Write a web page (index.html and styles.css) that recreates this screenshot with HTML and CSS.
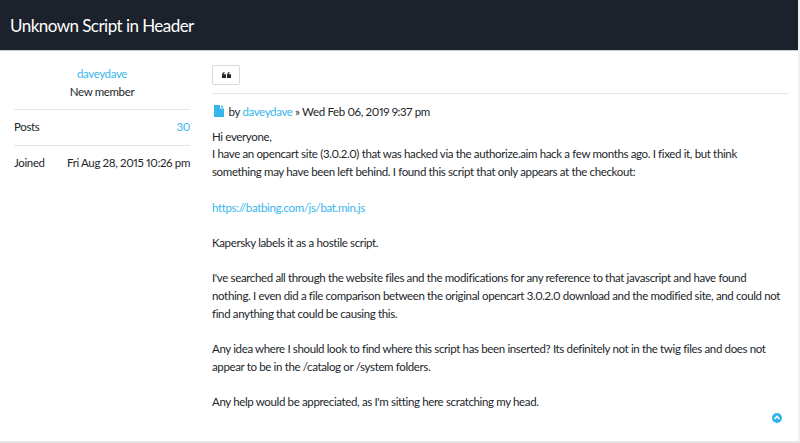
FILE: index.html
```html
<!DOCTYPE html>
<html lang="en">
<head>
<meta charset="utf-8">
<title>Unknown Script in Header</title>
<link rel="stylesheet" href="styles.css">
</head>
<body>
<header class="topic-header"><h1 class="topic-title">Unknown Script in Header</h1></header>
<main class="post">
  <aside class="profile">
    <div class="profile-id">
      <a class="link" href="#">daveydave</a>
      <div>New member</div>
    </div>
    <div class="profile-row"><span>Posts</span><a class="link" href="#">30</a></div>
    <div class="profile-row"><span>Joined</span><span>Fri Aug 28, 2015 10:26 pm</span></div>
  </aside>
  <article class="post-body">
    <div class="actions">
      <button class="quote-btn" type="button" aria-label="Quote">
        <svg class="quote-icon" viewBox="0 0 9 6" width="9" height="6"><path d="M0 3.200C0 1.400 1 .3 2.600 0v1C1.900 1.200 1.500 1.700 1.500 2.300H4V6H0zM5 3.200C5 1.400 6 .3 7.600 0v1C6.900 1.200 6.500 1.700 6.500 2.300H9V6H5z"/></svg>
      </button>
    </div>
    <p class="post-meta">
      <svg class="file-icon" viewBox="0 0 10 12" width="10" height="12"><path d="M0 0h6v3.500h4V12H0zM7 0l3 2.500H7z"/></svg>
      by <a class="link" href="#">daveydave</a> » Wed Feb 06, 2019 9:37 pm
    </p>
    <div class="content">
      <p>Hi everyone,<br>I have an opencart site (3.0.2.0) that was hacked via the authorize.aim hack a few months ago. I fixed it, but think something may have been left behind. I found this script that only appears at the checkout:</p>
      <p><a class="link" href="#">https://batbing.com/js/bat.min.js</a></p>
      <p>Kapersky labels it as a hostile script.</p>
      <p>I've searched all through the website files and the modifications for any reference to that javascript and have found nothing. I even did a file comparison between the original opencart 3.0.2.0 download and the modified site, and could not find anything that could be causing this.</p>
      <p>Any idea where I should look to find where this script has been inserted? Its definitely not in the twig files and does not appear to be in the /catalog or /system folders.</p>
      <p>Any help would be appreciated, as I'm sitting here scratching my head.</p>
    </div>
    <div class="to-top-row">
      <a class="to-top" href="#" aria-label="Top">
        <svg viewBox="0 0 10 10" width="10" height="10"><circle cx="5" cy="5" r="5" fill="#2fb3ec"/><path d="M2.500 6L5 3.500 7.500 6" fill="none" stroke="#fff" stroke-width="1.600"/></svg>
      </a>
    </div>
  </article>
</main>
</body>
</html>
```
FILE: styles.css
```css
* { box-sizing: border-box; }
html, body { margin: 0; height: 100%; overflow: hidden; }
body {
  display: flex;
  flex-direction: column;
  background: #fff;
  color: #22262a;
  font-family: Lato, "Noto Sans", sans-serif;
  font-size: 11.5px;
  letter-spacing: -0.36px;
  font-variant-numeric: proportional-nums;
  line-height: 17.7px;
  border-bottom: 2px solid #e6e6e6;
  border-right: 2px solid #f0f0f0;
}
.topic-header {
  background: #1c222b;
  height: 51px;
  flex: none;
  display: flex;
  align-items: center;
  padding-left: 10px;
  border-bottom: 1px solid #c9ccd0;
}
.topic-title { margin: 0; color: #fff; font-size: 17px; letter-spacing: -0.54px; font-weight: 400; line-height: 1; }
.post { display: flex; flex: 1; min-height: 0; padding: 14px 9px 0 14px; gap: 22px; }
.profile { width: 176px; flex: none; }
.profile-id { text-align: center; padding-bottom: 9px; border-bottom: 1px solid #e6e6e6; }
.profile-row {
  display: flex;
  justify-content: space-between;
  padding: 8px 0 8.5px;
  border-bottom: 1px solid #e6e6e6;
}
.profile-row:last-child { border-bottom: 0; }
.link { color: #37b6ee; text-decoration: none; }
.post-body { flex: 1; min-width: 0; display: flex; flex-direction: column; }
.actions { padding-bottom: 8px; border-bottom: 1px solid #e6e6e6; }
.quote-btn {
  display: flex;
  align-items: center;
  justify-content: center;
  width: 28px;
  height: 20px;
  padding: 0;
  background: #fff;
  border: 1px solid #d9d9d9;
  border-radius: 2px;
}
.quote-icon { fill: #22262a; }
.post-meta { margin: 9px 0 0; }
.file-icon { fill: #37b6ee; vertical-align: -1px; margin-right: 2px; margin-left: 2px; }
.content { margin-top: 7px; padding-right: 6px; }
.content p { margin: 0 0 17.7px; }
.to-top-row { display: flex; justify-content: flex-end; margin-top: -16px; padding-right: 7px; }
.to-top { display: block; height: 10px; line-height: 0; }
```
